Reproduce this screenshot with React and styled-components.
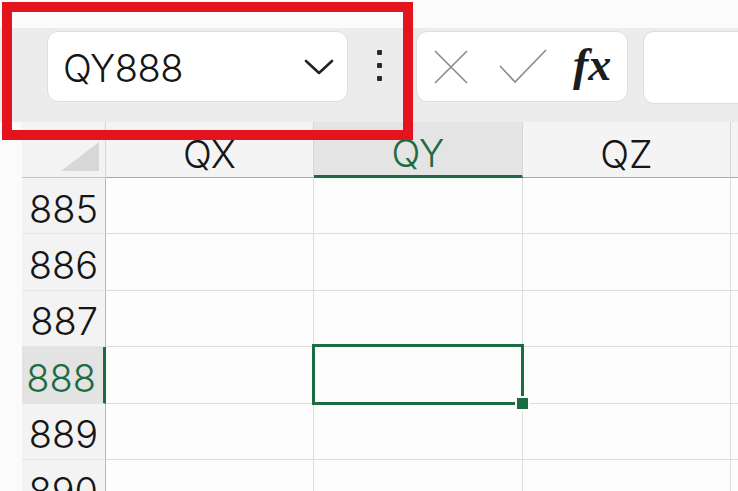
import React from 'react'
import styled, { createGlobalStyle } from 'styled-components'

const GlobalStyle = createGlobalStyle`
  html, body {
    margin: 0;
    padding: 0;
    background: #fbfbfb;
  }
  body {
    font-family: Inter, "Liberation Sans", sans-serif;
  }
`

const columns = ['QX', 'QY', 'QZ', '']
const rows = [885, 886, 887, 888, 889, 890]
const activeCol = 'QY'
const activeRow = 888

function App() {
  return (
    <Page>
      <GlobalStyle />
      <Toolbar>
        <NameBox>
          <NameText>QY888</NameText>
          <svg width="30" height="18" viewBox="0 0 30 18">
            <path d="M2 3 L15 15 L28 3" fill="none" stroke="#222" strokeWidth="2.6" strokeLinecap="round" strokeLinejoin="round" />
          </svg>
        </NameBox>
        <Kebab>
          <Dot />
          <Dot />
          <Dot />
        </Kebab>
        <FormulaButtons>
          <svg width="36" height="36" viewBox="0 0 36 36">
            <path d="M2 2 L34 34 M34 2 L2 34" stroke="#8a8a8a" strokeWidth="1.6" fill="none" />
          </svg>
          <svg width="48" height="36" viewBox="0 0 48 36">
            <path d="M1 17 L16 33 L47 1" stroke="#8a8a8a" strokeWidth="1.6" fill="none" />
          </svg>
          <Fx>fx</Fx>
        </FormulaButtons>
        <FormulaInput />
      </Toolbar>

      <Sheet>
        <Corner>
          <Triangle />
        </Corner>
        {columns.map((c, i) => (
          <ColHeader key={i} $active={c === activeCol}>{c}</ColHeader>
        ))}
        {rows.map((r) => (
          <React.Fragment key={r}>
            <RowHeader $active={r === activeRow}>{r}</RowHeader>
            {columns.map((c, i) => (
              <Cell key={i}>
                {r === activeRow && c === activeCol && (
                  <Selection>
                    <Handle />
                  </Selection>
                )}
              </Cell>
            ))}
          </React.Fragment>
        ))}
      </Sheet>

      <Highlight />
    </Page>
  )
}

export default App

const Page = styled.div`
  position: relative;
  width: 738px;
  height: 491px;
  overflow: hidden;
  padding-top: 28px;
  box-sizing: border-box;
  background: #fbfbfb;
`

const Toolbar = styled.div`
  display: flex;
  align-items: flex-start;
  height: 94px;
  padding: 3px 0 0 47px;
  box-sizing: border-box;
  background: #ececec;
  & > * {
    flex-shrink: 0;
  }
`

const NameBox = styled.div`
  display: flex;
  align-items: center;
  justify-content: space-between;
  width: 301px;
  height: 71px;
  box-sizing: border-box;
  padding: 0 13px 0 15px;
  background: #fff;
  border: 1px solid #dedede;
  border-radius: 11px;
`

const NameText = styled.span`
  font-size: 38px;
  font-weight: 300;
  color: #161616;
  letter-spacing: -0.5px;
  padding-top: 2px;
`

const Kebab = styled.div`
  display: flex;
  flex-direction: column;
  align-items: center;
  gap: 8px;
  width: 68px;
  padding: 19px 5px 0 0;
  box-sizing: border-box;
`

const Dot = styled.span`
  width: 5px;
  height: 5px;
  border-radius: 1px;
  background: #2a2a2a;
`

const FormulaButtons = styled.div`
  display: flex;
  align-items: center;
  gap: 30px;
  width: 212px;
  height: 71px;
  box-sizing: border-box;
  padding: 0 0 0 16px;
  background: #fff;
  border: 1px solid #dedede;
  border-radius: 11px;
`

const Fx = styled.span`
  font-family: "Liberation Serif", serif;
  font-style: italic;
  font-weight: bold;
  font-size: 46px;
  color: #1c1c1c;
  margin-left: -4px;
  padding-bottom: 4px;
`

const FormulaInput = styled.div`
  width: 140px;
  height: 71px;
  margin-left: 15px;
  background: #fff;
  border: 1px solid #dedede;
  border-radius: 11px;
`

const Sheet = styled.div`
  display: grid;
  grid-template-columns: 84px 208px 209px 208px 120px;
  grid-template-rows: 56px repeat(6, 56.4px);
  margin-left: 22px;
  font-size: 38px;
  font-weight: 300;
  color: #161616;
`

const Corner = styled.div`
  display: flex;
  justify-content: flex-end;
  align-items: flex-end;
  padding: 0 6px 6px 0;
  background: #f3f3f3;
  border-bottom: 1px solid #c4c4c4;
  border-right: 1px solid #d6d6d6;
`

const Triangle = styled.div`
  width: 38px;
  height: 29px;
  background: #d7d7d7;
  clip-path: polygon(100% 0, 100% 100%, 0 100%);
`

const ColHeader = styled.div`
  display: flex;
  justify-content: center;
  align-items: center;
  padding-top: 8px;
  box-sizing: border-box;
  background: ${(p) => (p.$active ? '#e4e4e4' : '#f4f4f4')};
  color: ${(p) => (p.$active ? '#1d6b43' : '#161616')};
  border-right: 1px solid #d6d6d6;
  border-bottom: ${(p) => (p.$active ? '3px solid #1d6b43' : '1px solid #a8a8a8')};
  line-height: 1;
  overflow: hidden;
`

const RowHeader = styled.div`
  display: flex;
  justify-content: flex-end;
  align-items: center;
  padding: 6px 7px 0 0;
  box-sizing: border-box;
  background: ${(p) => (p.$active ? '#e3e3e3' : '#f3f3f3')};
  color: ${(p) => (p.$active ? '#1d6b43' : '#161616')};
  border-right: ${(p) => (p.$active ? '3px solid #1d6b43' : '1px solid #b8b8b8')};
  border-bottom: 1px solid #e6e6e6;
  line-height: 1;
`

const Cell = styled.div`
  position: relative;
  background: #fdfdfd;
  border-right: 1px solid #dddddd;
  border-bottom: 1px solid #dddddd;
`

const Selection = styled.div`
  position: absolute;
  left: -2px;
  top: -3px;
  right: -2px;
  bottom: -2px;
  border: 3px solid #1d6b43;
  z-index: 1;
`

const Handle = styled.div`
  position: absolute;
  right: -9px;
  bottom: -9px;
  width: 11px;
  height: 11px;
  background: #1d6b43;
  border: 2px solid #fdfdfd;
`

const Highlight = styled.div`
  position: absolute;
  left: 2px;
  top: 2px;
  width: 411px;
  height: 138px;
  box-sizing: border-box;
  border: 10px solid #e3141d;
  pointer-events: none;
  z-index: 2;
`
